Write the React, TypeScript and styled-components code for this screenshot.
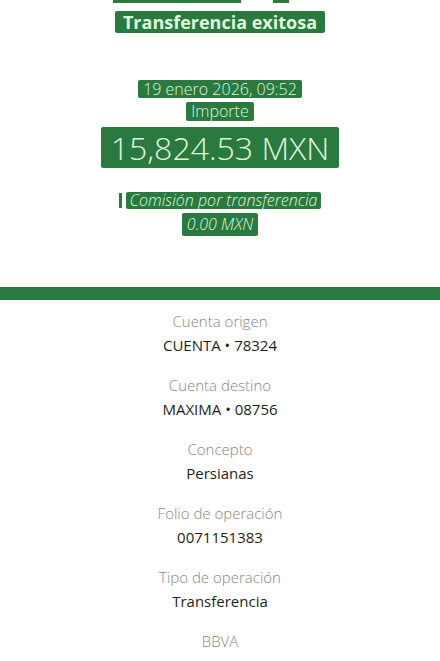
import React from "react";
import styled, { createGlobalStyle } from "styled-components";

const GlobalStyle = createGlobalStyle`
  html, body {
    margin: 0;
    padding: 0;
    background: #ffffff;
  }
  body {
    font-family: "Open Sans", Lato, "Liberation Sans", sans-serif;
  }
`;

const GREEN = "#2a7a3f";
const MINT = "#dff6df";

const details = [
  { label: "Cuenta origen", value: "CUENTA • 78324" },
  { label: "Cuenta destino", value: "MAXIMA • 08756" },
  { label: "Concepto", value: "Persianas" },
  { label: "Folio de operación", value: "0071151383" },
  { label: "Tipo de operación", value: "Transferencia" },
];

const App = () => {
  return (
    <>
      <GlobalStyle />
      <Page>
        <Header>
          <TopCut>
            <CutPiece $w={128} />
            <CutPiece $w={16} />
          </TopCut>
          <Row $top={8}>
            <Mark $h={22} $size={18} $weight={700} $pad={8}>
              Transferencia exitosa
            </Mark>
          </Row>
          <Row $top={47}>
            <Mark $h={18} $size={16} $pad={5}>
              19 enero 2026, 09:52
            </Mark>
          </Row>
          <Row $top={4}>
            <Mark $h={19} $size={16} $pad={5}>
              Importe
            </Mark>
          </Row>
          <Row $top={6}>
            <Mark $h={41} $size={32} $pad={10}>
              15,824.53 MXN
            </Mark>
          </Row>
          <Row $top={24}>
            <Tick />
            <Mark $h={17} $size={16} $pad={4} $italic>
              Comisión por transferencia
            </Mark>
          </Row>
          <Row $top={4}>
            <Mark $h={23} $size={16} $pad={5} $italic>
              0.00 MXN
            </Mark>
          </Row>
        </Header>
        <Band />
        <Details>
          {details.map((d) => (
            <Item key={d.label}>
              <Label>{d.label}</Label>
              <Value>{d.value}</Value>
            </Item>
          ))}
          <Item>
            <Label>BBVA</Label>
          </Item>
        </Details>
      </Page>
    </>
  );
};

export default App;

const Page = styled.div`
  width: 440px;
  min-height: 661px;
  background: #ffffff;
  overflow: hidden;
`;

const Header = styled.div`
  display: flex;
  flex-direction: column;
  align-items: center;
`;

const TopCut = styled.div`
  display: flex;
  gap: 32px;
  height: 3px;
  margin-left: -38px;
`;

const CutPiece = styled.div<{ $w: number }>`
  width: ${({ $w }) => $w}px;
  height: 3px;
  background: ${GREEN};
`;

const Row = styled.div<{ $top: number }>`
  display: flex;
  align-items: center;
  justify-content: center;
  gap: 4px;
  margin-top: ${({ $top }) => $top}px;
`;

const Mark = styled.span<{
  $h: number;
  $size: number;
  $weight?: number;
  $pad: number;
  $italic?: boolean;
}>`
  display: inline-block;
  height: ${({ $h }) => $h}px;
  line-height: ${({ $h }) => $h}px;
  padding: 0 ${({ $pad }) => $pad}px;
  background: ${GREEN};
  color: ${MINT};
  font-size: ${({ $size }) => $size}px;
  font-weight: ${({ $weight }) => $weight ?? 300};
  font-style: ${({ $italic }) => ($italic ? "italic" : "normal")};
  white-space: nowrap;
  border-radius: 2px;
`;

const Tick = styled.span`
  display: inline-block;
  width: 3px;
  height: 15px;
  background: ${GREEN};
`;

const Band = styled.div`
  height: 13px;
  margin-top: 51px;
  background: ${GREEN};
`;

const Details = styled.div`
  display: flex;
  flex-direction: column;
  align-items: center;
  gap: 16px;
  padding-top: 9px;
`;

const Item = styled.div`
  display: flex;
  flex-direction: column;
  align-items: center;
`;

const Label = styled.div`
  font-size: 15px;
  line-height: 24px;
  font-weight: 300;
  color: #888888;
`;

const Value = styled.div`
  font-size: 15px;
  line-height: 24px;
  font-weight: 400;
  color: #1e1e1e;
`;
